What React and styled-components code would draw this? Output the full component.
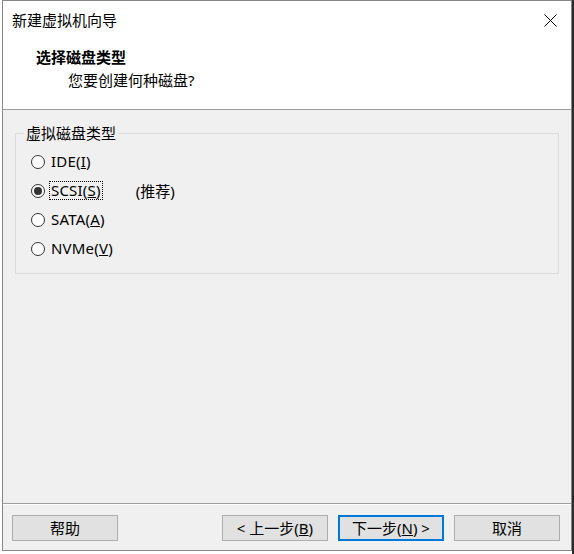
import React from 'react';
import styled, { createGlobalStyle } from 'styled-components';

const GlobalStyle = createGlobalStyle`
    html, body {
        margin: 0;
        padding: 0;
        height: 100%;
    }
    body {
        background: linear-gradient(to right, #ffffff 0, #ffffff 572px, #2b2b2b 572px);
        font-family: "Noto Sans", "Noto Sans CJK SC", sans-serif;
        color: #000;
    }
`

const Page = styled.div`
    padding-left: 2px;
    width: 572px;
    height: 554px;
    box-sizing: border-box;
`
const Dialog = styled.div`
    width: 570px;
    height: 551px;
    box-sizing: border-box;
    border: 1px solid #888888;
    background-color: #f0f0f0;
    display: flex;
    flex-direction: column;
`
const TitleBar = styled.div`
    height: 38px;
    background-color: #ffffff;
    display: flex;
    align-items: center;
    justify-content: space-between;
    padding-left: 9px;
`
const Title = styled.div`
    font-size: 15px;
    line-height: 20px;
`
const CloseButton = styled.div`
    width: 42px;
    height: 38px;
    display: flex;
    align-items: center;
    justify-content: center;
`
const Header = styled.div`
    height: 71px;
    box-sizing: border-box;
    background-color: #ffffff;
    padding: 8px 0 0 33px;
    border-bottom: 1px solid #a0a0a0;
`
const Heading = styled.div`
    font-size: 15px;
    line-height: 20px;
    font-weight: bold;
`
const SubHeading = styled.div`
    font-size: 15px;
    line-height: 20px;
    margin: 3px 0 0 32px;
`
const Body = styled.div`
    flex: 1;
    padding: 14px 12px 0 12px;
`
const GroupBox = styled.fieldset`
    margin: 0;
    padding: 5px 8px 10px 8px;
    border: 1px solid #dcdcdc;
    min-width: 0;
`
const GroupLabel = styled.legend`
    font-size: 15px;
    line-height: 18px;
    padding: 0 2px;
`
const RadioRow = styled.div`
    height: 29px;
    display: flex;
    align-items: center;
    padding-left: 7px;
    font-size: 15px;
`
const RadioCircle = styled.span`
    flex-shrink: 0;
    width: 14px;
    height: 14px;
    box-sizing: border-box;
    border: 1px solid #333333;
    border-radius: 50%;
    background-color: #ffffff;
    display: flex;
    align-items: center;
    justify-content: center;
    margin-right: 6px;

    &::after {
        content: "";
        width: 8px;
        height: 8px;
        border-radius: 50%;
        background-color: ${props => props.$checked ? '#333333' : 'transparent'};
    }
`
const RadioText = styled.span`
    line-height: 17px;
    padding: 0 1px;
    border: 1px dotted ${props => props.$focused ? '#000000' : 'transparent'};
    margin-left: -2px;
    letter-spacing: 0.2px;
`
const Note = styled.span`
    margin-left: 33px;
`
const Footer = styled.div`
    height: 47px;
    box-sizing: border-box;
    border-top: 1px solid #a0a0a0;
    box-shadow: inset 0 1px #ffffff;
    padding: 11px 11px 0 9px;
    display: flex;
    justify-content: space-between;
`
const ButtonGroup = styled.div`
    display: flex;
    gap: 10px;
`
const Button = styled.button`
    width: 106px;
    height: 26px;
    box-sizing: border-box;
    background-color: #e1e1e1;
    border: ${props => props.$primary ? '2px solid #0078d7' : '1px solid #adadad'};
    font-family: "Noto Sans", "Noto Sans CJK SC", sans-serif;
    font-size: 15px;
    line-height: 18px;
    color: #000;
    padding: 0;
`

const options = [
    { label: 'IDE', key: 'I' },
    { label: 'SCSI', key: 'S', checked: true, note: '(推荐)' },
    { label: 'SATA', key: 'A' },
    { label: 'NVMe', key: 'V' },
]

function App() {
    return (
        <>
            <GlobalStyle />
            <Page>
                <Dialog>
                    <TitleBar>
                        <Title>新建虚拟机向导</Title>
                        <CloseButton>
                            <svg width="13" height="13" viewBox="0 0 13 13">
                                <path d="M0.5 0.5 L12.5 12.5 M12.5 0.5 L0.5 12.5" stroke="#000" strokeWidth="1" fill="none" />
                            </svg>
                        </CloseButton>
                    </TitleBar>
                    <Header>
                        <Heading>选择磁盘类型</Heading>
                        <SubHeading>您要创建何种磁盘?</SubHeading>
                    </Header>
                    <Body>
                        <GroupBox>
                            <GroupLabel>虚拟磁盘类型</GroupLabel>
                            {options.map(opt => (
                                <RadioRow key={opt.label}>
                                    <RadioCircle $checked={opt.checked} />
                                    <RadioText $focused={opt.checked}>
                                        {opt.label}(<u>{opt.key}</u>)
                                    </RadioText>
                                    {opt.note && <Note>{opt.note}</Note>}
                                </RadioRow>
                            ))}
                        </GroupBox>
                    </Body>
                    <Footer>
                        <Button>帮助</Button>
                        <ButtonGroup>
                            <Button>&lt; 上一步(<u>B</u>)</Button>
                            <Button $primary>下一步(<u>N</u>) &gt;</Button>
                            <Button>取消</Button>
                        </ButtonGroup>
                    </Footer>
                </Dialog>
            </Page>
        </>
    )
}

export default App
